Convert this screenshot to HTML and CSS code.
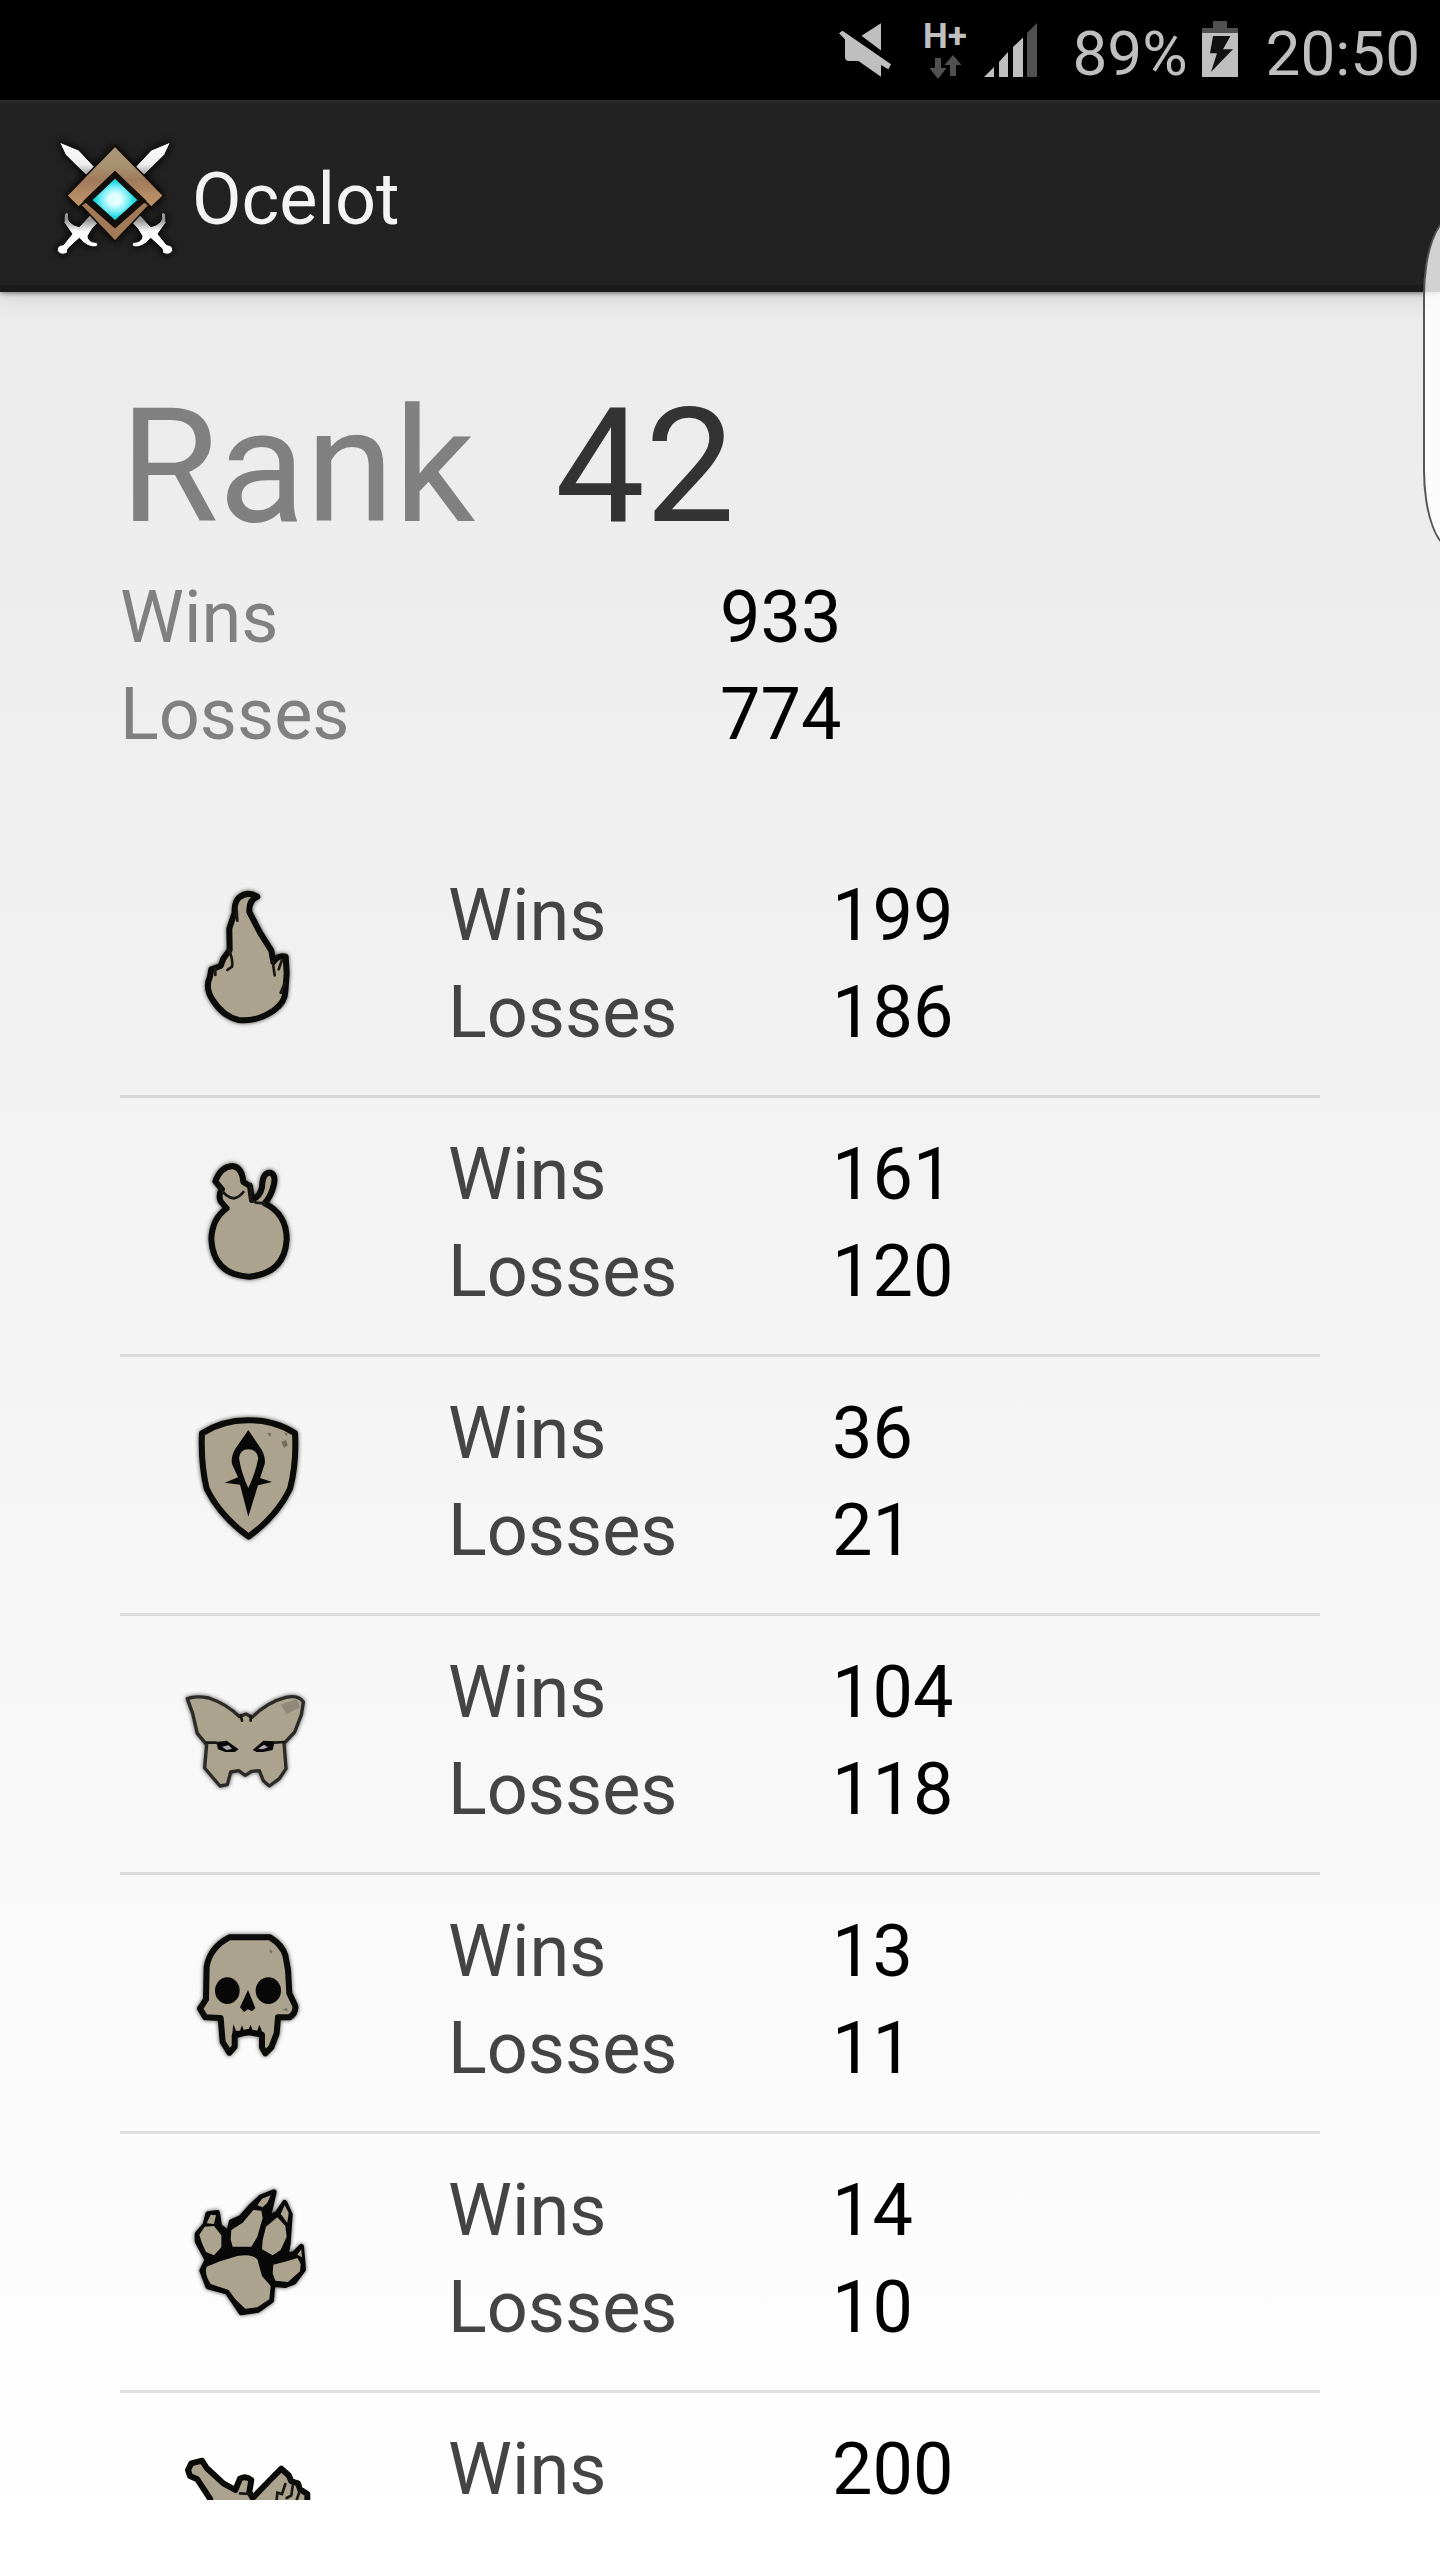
FILE: index.html
```html
<!DOCTYPE html>
<html lang="en">
<head>
    <meta charset="UTF-8">
    <meta name="viewport" content="width=device-width, initial-scale=1.0">
    <title>Ocelot</title>
    <link rel="stylesheet" href="styles.css">
</head>
<body>
    <div class="status-bar">
        <svg class="mute" viewBox="0 0 60 68">
            <path d="M25.5 15.7L45 3.3V30.5zM3 13.3L6.500 10.700L55 44.300L52.400 49.300L45 45V56.700L22.400 41H13Q9 41 9 37V19.300z"/>
        </svg>
        <svg class="network" viewBox="0 0 44 68">
            <text x="1" y="28">H+</text>
            <path class="dim" d="M13 38H19V48H24.500L16 59L7.500 48H13zM28 56H34V45H39.500L31 35L22.500 45H28z"/>
        </svg>
        <svg class="signal" viewBox="0 0 56 68">
            <path d="M2 57L12 47V57zM17 57V42L26 32V57zM31 57V27L41 17.500V57z"/>
            <path class="dim" d="M45 57V13L55 3V57z"/>
        </svg>
        <span class="percent">89%</span>
        <svg class="battery" viewBox="0 0 36 68">
            <path class="dim" d="M11 1H25V8H36V13H0V8H11z"/>
            <path d="M0 13H36V57H0z"/>
            <path class="bolt" d="M11 16H28.500L21 29.300H31L9 52L15 33.300H8z"/>
        </svg>
        <span class="clock">20:50</span>
    </div>

    <header class="action-bar">
        <svg class="logo" viewBox="144 135 384 384">
            <defs>
                <linearGradient id="blade" x1="0" y1="0" x2="0" y2="1">
                    <stop offset="0" stop-color="#fff"/>
                    <stop offset="0.2" stop-color="#eee"/>
                    <stop offset="0.32" stop-color="#888"/>
                    <stop offset="0.7" stop-color="#999"/>
                    <stop offset="0.8" stop-color="#fff"/>
                </linearGradient>
                <linearGradient id="wood" x1="0" y1="0" x2="0" y2="1">
                    <stop offset="0" stop-color="#a8977a"/>
                    <stop offset="0.35" stop-color="#a8906f"/>
                    <stop offset="0.55" stop-color="#a07a5b"/>
                    <stop offset="1" stop-color="#c2986a"/>
                </linearGradient>
                <radialGradient id="gem">
                    <stop offset="0.25" stop-color="#e4ffff"/>
                    <stop offset="0.6" stop-color="#7beef5"/>
                    <stop offset="0.85" stop-color="#1fd8e3"/>
                </radialGradient>
                <path id="sword" d="M178 156L236 180L292 240L432 388L452 410Q468 408 480 396Q488 388 484 370Q492 364 497 373L498 398L474 432L500 464Q520 466 518 482Q510 498 489 490L486 476L452 445Q426 476 400 470Q392 462 402 457Q426 456 426 438L412 415L270 266L234 232L196 194z"/>
            </defs>
            <g fill="url(#blade)" stroke="#0c0c0c" stroke-width="3">
                <use href="#sword"/>
                <use href="#sword" transform="translate(690 0) scale(-1 1)"/>
            </g>
            <g stroke="#150d08" stroke-width="5">
                <path fill="#a27a58" d="M242 345L345 454L448 345L424 330H266z"/>
                <path fill="url(#wood)" d="M345 168L491 317L454 352L345 246L236 352L200 317z"/>
                <path fill="#120f0e" d="M345 246L436 332L345 412L254 332z"/>
            </g>
            <path fill="url(#gem)" d="M345 266L412 330L345 390L278 330z"/>
        </svg>
        <h1>Ocelot</h1>
    </header>

    <main class="profile">
        <div class="rank">
            <span class="rank-label">Rank</span>
            <span class="rank-value">42</span>
        </div>
        <dl class="totals">
            <dt>Wins</dt><dd>933</dd>
            <dt>Losses</dt><dd>774</dd>
        </dl>

        <ul class="factions">
            <li>
                <!-- fire -->
                <svg class="faction" viewBox="0 21 540 582">
                    <path class="shape" d="M292 110Q262 92 238 112Q222 126 224 158L208 206L209 270L190 296L182 318L154 328L150 350Q134 384 158 420Q190 470 236 480Q290 486 340 452Q376 428 376 394L380 340L377 290Q354 284 340 306L334 272L300 218L268 156Q266 120 292 110z"/>
                    <path class="line" d="M206 268Q220 300 216 320L202 330M338 304L344 346M230 150L232 182M366 300L356 328M374 370L362 398M166 326V345"/>
                </svg>
                <dl><dt>Wins</dt><dd>199</dd><dt>Losses</dt><dd>186</dd></dl>
            </li>
            <li>
                <!-- bomb -->
                <svg class="faction" viewBox="0 -42 540 582">
                    <path class="shape" d="M166 124Q182 80 218 78Q246 82 250 126L270 138L276 180Q300 170 306 142Q308 96 330 98Q350 104 340 140Q332 170 314 190Q380 222 380 298Q374 400 268 410Q160 404 154 298Q156 236 200 205L182 184Q174 164 186 148z"/>
                    <path class="line" d="M180 142Q196 172 222 175Q238 172 250 156M276 180L288 188L314 190M272 132V180"/>
                </svg>
                <dl><dt>Wins</dt><dd>161</dd><dt>Losses</dt><dd>120</dd></dl>
            </li>
            <li>
                <!-- shield -->
                <svg class="faction" viewBox="0 -15 540 582">
                    <path class="shape" d="M126 130Q190 90 266 91Q344 90 405 130Q410 220 390 296Q352 376 266 440Q180 378 140 296Q122 220 126 130z"/>
                    <path class="ink" fill-rule="evenodd" d="M265 120L304 178Q318 204 314 222L300 264L336 276L294 286L265 380L240 284L194 278L234 262L216 222Q212 200 226 176zM265 178Q240 178 237 204Q244 250 265 294Q286 250 295 204Q290 178 265 178z"/>
                    <path class="stain" d="M322 128l12 2l-4 12zM364 156l14-6l6 16l-12 8zM372 126l12 6l-6 6z"/>
                </svg>
                <dl><dt>Wins</dt><dd>36</dd><dt>Losses</dt><dd>21</dd></dl>
            </li>
            <li>
                <!-- butterfly mask -->
                <svg class="faction thin" viewBox="0 -78 540 582">
                    <path class="shape" d="M82 86Q108 76 146 84Q200 102 238 140L258 132L276 142Q322 96 378 82Q416 74 430 96L424 134L404 186L372 220L378 296L358 326L328 348L310 332L298 302L274 304L256 316L236 302L212 306L202 344L180 348L134 294L140 224L112 190L98 130z"/>
                    <path class="stain soft" d="M362 104L410 88L420 112L380 132z"/>
                    <path class="ink" d="M168 216L200 212L236 238L224 246L196 246L174 238zM278 240L310 212L344 214L338 240L310 246L290 246z"/>
                    <path class="glint" d="M186 230L206 226L216 236L200 240zM294 236L312 224L324 232L308 238z"/>
                    <path class="line" d="M140 218H168M344 218L372 216M242 136L246 152M272 138V152"/>
                </svg>
                <dl><dt>Wins</dt><dd>104</dd><dt>Losses</dt><dd>118</dd></dl>
            </li>
            <li>
                <!-- skull -->
                <svg class="faction" viewBox="0 -21 540 582">
                    <path class="shape" d="M208 82H330Q366 104 376 136L384 180L388 250L406 288Q408 310 388 322L354 322L350 370L334 412L316 430L306 412V374L264 366L224 376V410L208 428L188 396L182 324L136 322L120 296L138 268L140 170Q150 112 208 82z"/>
                    <ellipse class="ink" cx="202" cy="242" rx="37" ry="40"/>
                    <ellipse class="ink" cx="325" cy="242" rx="38" ry="40"/>
                    <path class="ink" d="M264 240L286 294L276 304L264 298L252 306L240 292zM220 342L228 362H240L246 346L252 362H264L272 344L278 362H292L298 344L310 374L264 376L216 380z"/>
                    <path class="stain" d="M328 118l10 6l-6 8zM366 300l14-6l4 8z"/>
                </svg>
                <dl><dt>Wins</dt><dd>13</dd><dt>Losses</dt><dd>11</dd></dl>
            </li>
            <li>
                <!-- paw -->
                <svg class="faction" viewBox="0 -24 540 582">
                    <path class="ink outline" d="M112 192L136 164L144 132L172 128L178 168L206 190L214 156L244 142L272 110L302 82L342 66L332 110L322 146L352 130L374 98L390 134L384 220L378 256L402 252L424 230L430 298L402 336L376 346L338 342L334 392L294 420L244 428L202 366L144 350L126 302L142 270L112 214z"/>
                    <path class="pad" d="M140 290L180 274L232 258Q274 250 292 268L306 318L332 348L328 388L292 412L256 416L226 388L206 360L152 342Q132 312 140 290z"/>
                    <path class="pad" d="M118 194L134 170L162 168L184 196V232L162 256L138 246L126 220zM140 160L152 134L168 136L162 162z"/>
                    <path class="pad" d="M214 180L248 158L280 120L304 122L308 144L292 200L274 230H218L212 208zM292 106L306 86L332 76L322 98L308 112z"/>
                    <path class="pad" d="M318 170L352 142L376 168L380 200L362 240L338 256L306 238L308 210zM362 132L374 106L386 128L382 158z"/>
                    <path class="pad" d="M340 284L380 274L412 264L422 282L420 304L384 336L346 332L338 310zM412 254L424 238L426 262z"/>
                </svg>
                <dl><dt>Wins</dt><dd>14</dd><dt>Losses</dt><dd>10</dd></dl>
            </li>
            <li>
                <!-- tech, only the top of the icon is scrolled in -->
                <svg class="faction peek" viewBox="0 153 540 237">
                    <path class="shape" d="M90 318L84 300L94 280L126 272L140 294L190 340L226 360L240 326Q258 316 274 330L268 366L278 384L330 330L364 296L386 316L394 334L414 340L420 358L442 372V396L360 470L270 470L170 470L150 386L112 328z"/>
                    <path class="line" d="M376 342L366 372L352 368L350 390M398 348L394 376L380 384M418 366L408 396M240 370L270 372"/>
                </svg>
                <dl><dt>Wins</dt><dd>200</dd></dl>
            </li>
        </ul>
    </main>

    <div class="edge-handle"></div>
</body>
</html>
```
FILE: styles.css
```css
* {
    box-sizing: border-box;
}
body {
    margin: 0;
    min-height: 100vh;
    display: flex;
    flex-direction: column;
    position: relative;
    overflow-x: hidden;
    font-family: Roboto, sans-serif;
    font-size: 72px;
    line-height: 97px;
    color: #000;
    background: #fff;
}

/* system status bar */
.status-bar {
    display: flex;
    flex: none;
    align-items: center;
    justify-content: flex-end;
    height: 100px;
    padding: 8px 20px 0 0;
    background: #000;
    color: #bfbfbf;
    font-size: 62px;
    line-height: 72px;
}
.status-bar svg {
    height: 68px;
    fill: #bfbfbf;
    overflow: visible;
}
.status-bar .dim {
    fill: #505050;
}
.status-bar .bolt {
    fill: #111;
}
.mute {
    width: 60px;
    margin-right: 26px;
}
.network {
    width: 44px;
    margin-right: 16px;
    font-size: 35px;
    font-weight: bold;
}
.signal {
    width: 56px;
    margin-right: 34px;
}
.battery {
    width: 36px;
    margin: 0 28px 0 14px;
}

/* title bar */
.action-bar {
    display: flex;
    flex: none;
    align-items: center;
    gap: 16px;
    height: 192px;
    padding: 6px 48px 0;
    background: linear-gradient(#2e2e2e, #222 4px, #222 184px, #1a1a1a 186px);
    box-shadow: 0 1px 5px rgba(0, 0, 0, 0.5), 0 4px 24px rgba(0, 0, 0, 0.12);
    position: relative;
}
.logo {
    width: 128px;
    height: 128px;
    filter: drop-shadow(0 0 5px #000);
}
h1 {
    margin: 0;
    font-size: 72px;
    font-weight: normal;
    color: #f3f3f3;
}

/* player stats */
.profile {
    flex: 1;
    padding: 81px 120px 40px;
    background: linear-gradient(#ebebeb, #fff);
}
.rank {
    display: flex;
    gap: 80px;
    margin-bottom: 8px;
    font-size: 160px;
    line-height: 188px;
}
.rank-label {
    color: #808080;
}
.rank-value {
    color: #333;
}
dl, dd {
    margin: 0;
}
.totals {
    display: grid;
    grid-template-columns: 1fr 1fr;
    margin-bottom: 76px;
    color: #808080;
}
dd {
    color: #000;
}

/* one row per faction */
.factions {
    margin: 0;
    padding: 0;
    list-style: none;
}
.factions li {
    display: flex;
    padding: 28px 0 34px;
    border-bottom: 3px solid rgba(0, 0, 0, 0.11);
}
.factions li:last-child {
    padding-bottom: 0;
    border-bottom: none;
}
.factions dl {
    flex: 1;
    display: grid;
    grid-template-columns: 384px 1fr;
    color: #444;
}
.faction {
    width: 180px;
    height: 194px;
    margin: 0 108px 0 40px;
    filter: drop-shadow(0 0 2px rgba(0, 0, 0, 0.7));
}
.peek {
    height: 79px;
    overflow: hidden;
    filter: none;
}
.shape {
    fill: #aca38f;
    stroke: #0b0b0a;
    stroke-width: 18;
    stroke-linejoin: round;
}
.thin .shape {
    stroke: #2c2a26;
    stroke-width: 10;
}
.line {
    fill: none;
    stroke: #1a1815;
    stroke-width: 8;
    stroke-linecap: round;
}
.ink {
    fill: #080808;
}
.outline {
    stroke: #080808;
    stroke-width: 16;
    stroke-linejoin: round;
}
.pad {
    fill: #aca38f;
}
.stain {
    fill: #746e62;
}
.soft {
    opacity: 0.5;
}
.glint {
    fill: #aaa;
}

/* edge panel handle, half off the screen */
.edge-handle {
    position: absolute;
    top: 216px;
    right: -43px;
    width: 60px;
    height: 334px;
    border: 2px solid #555;
    border-radius: 30px / 80px;
    background: rgba(255, 255, 255, 0.8);
}
```
